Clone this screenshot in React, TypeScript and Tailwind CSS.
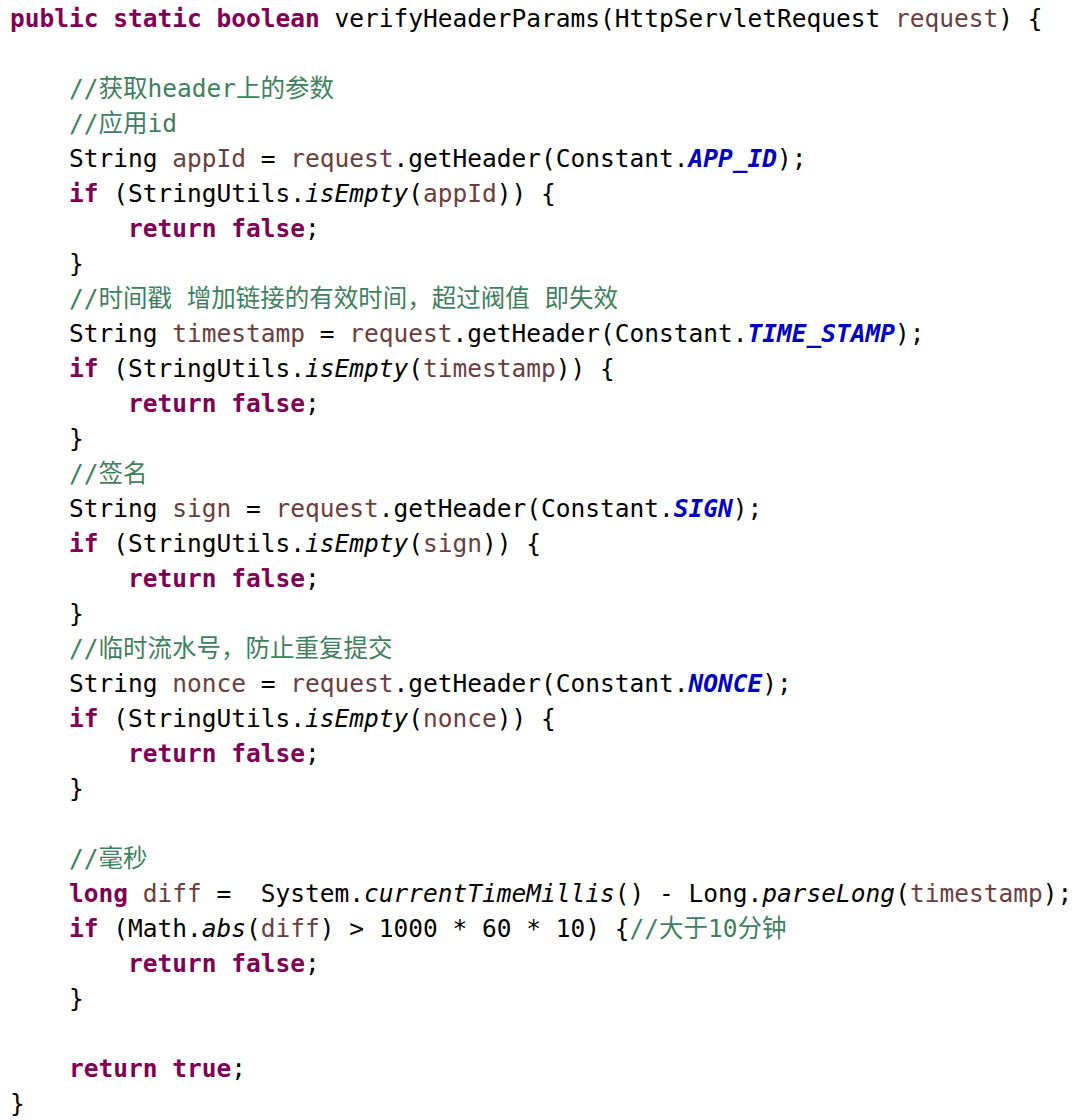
import React from 'react';

const K = ({ children }: { children: React.ReactNode }) => (
  <span className="font-bold text-[#7f0055]">{children}</span>
);
const C = ({ children }: { children: React.ReactNode }) => (
  <span className="text-[#3f7f5f]">{children}</span>
);
const V = ({ children }: { children: React.ReactNode }) => (
  <span className="text-[#6a3e3e]">{children}</span>
);
const S = ({ children }: { children: React.ReactNode }) => <span className="italic">{children}</span>;
const F = ({ children }: { children: React.ReactNode }) => (
  <span className="font-bold italic text-[#0000c0]">{children}</span>
);

const Line = ({ children }: { children?: React.ReactNode }) => (
  <div className="h-[35px] whitespace-pre">{children ?? ' '}</div>
);

const HeaderCheck = ({ comment, name, field }: { comment: string; name: string; field: string }) => (
  <>
    <Line>
      {'    '}
      <C>{comment}</C>
    </Line>
    <Line>
      {'    String '}
      <V>{name}</V>
      {' = '}
      <V>request</V>
      {'.getHeader(Constant.'}
      <F>{field}</F>
      {');'}
    </Line>
    <Line>
      {'    '}
      <K>if</K>
      {' (StringUtils.'}
      <S>isEmpty</S>
      {'('}
      <V>{name}</V>
      {')) {'}
    </Line>
    <Line>
      {'        '}
      <K>return false</K>
      {';'}
    </Line>
    <Line>{'    }'}</Line>
  </>
);

export default function App() {
  return (
    <div
      className="w-[1080px] h-[1120px] bg-white pl-[10px] pt-[1px] text-black text-[24.5px] leading-[35px]"
      style={{ fontFamily: '"DejaVu Sans Mono", "Noto Sans CJK SC", monospace' }}
    >
      <Line>
        <K>public static boolean</K>
        {' verifyHeaderParams(HttpServletRequest '}
        <V>request</V>
        {') {'}
      </Line>
      <Line />
      <Line>
        {'    '}
        <C>//获取header上的参数</C>
      </Line>
      <HeaderCheck comment="//应用id" name="appId" field="APP_ID" />
      <HeaderCheck comment="//时间戳 增加链接的有效时间，超过阀值 即失效" name="timestamp" field="TIME_STAMP" />
      <HeaderCheck comment="//签名" name="sign" field="SIGN" />
      <HeaderCheck comment="//临时流水号，防止重复提交" name="nonce" field="NONCE" />
      <Line />
      <Line>
        {'    '}
        <C>//毫秒</C>
      </Line>
      <Line>
        {'    '}
        <K>long</K>
        {' '}
        <V>diff</V>
        {' =  System.'}
        <S>currentTimeMillis</S>
        {'() - Long.'}
        <S>parseLong</S>
        {'('}
        <V>timestamp</V>
        {');'}
      </Line>
      <Line>
        {'    '}
        <K>if</K>
        {' (Math.'}
        <S>abs</S>
        {'('}
        <V>diff</V>
        {') > 1000 * 60 * 10) {'}
        <C>//大于10分钟</C>
      </Line>
      <Line>
        {'        '}
        <K>return false</K>
        {';'}
      </Line>
      <Line>{'    }'}</Line>
      <Line />
      <Line>
        {'    '}
        <K>return true</K>
        {';'}
      </Line>
      <Line>{'}'}</Line>
    </div>
  );
}
